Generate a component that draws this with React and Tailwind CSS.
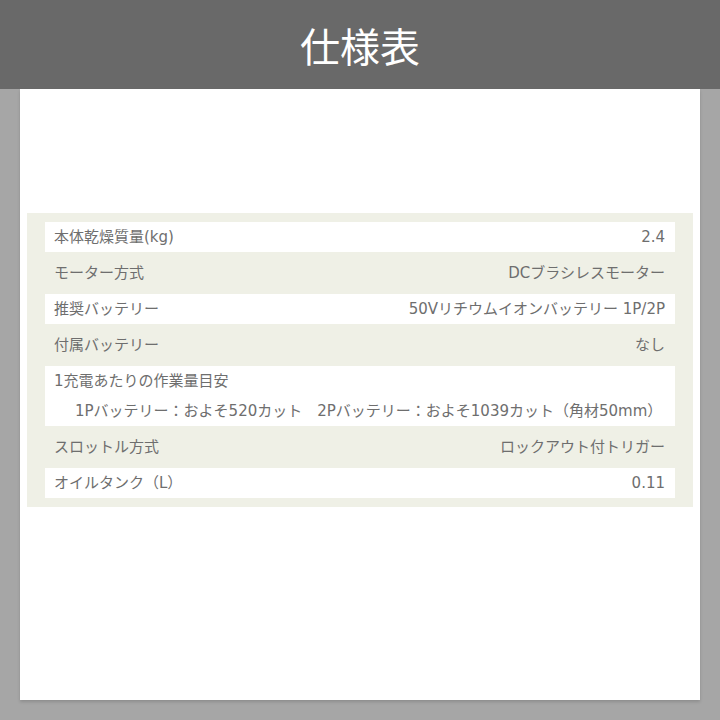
import React from 'react';

const SPECS = [
  { label: '本体乾燥質量(kg)', value: '2.4' },
  { label: 'モーター方式', value: 'DCブラシレスモーター' },
  { label: '推奨バッテリー', value: '50Vリチウムイオンバッテリー 1P/2P' },
  { label: '付属バッテリー', value: 'なし' },
  {
    label: '1充電あたりの作業量目安',
    note: '1Pバッテリー：およそ520カット　2Pバッテリー：およそ1039カット（角材50mm）',
  },
  { label: 'スロットル方式', value: 'ロックアウト付トリガー' },
  { label: 'オイルタンク（L）', value: '0.11' },
];

export default function App() {
  return (
    <div className="w-[720px] h-[720px] bg-[#a6a6a6] flex flex-col overflow-hidden">
      <header
        className="h-[89px] bg-[#696969] flex items-center justify-center shrink-0"
        style={{ fontFamily: '"Noto Sans CJK JP", sans-serif' }}
      >
        <h1 className="text-white text-[40px] leading-none">仕様表</h1>
      </header>

      <div className="mx-[20px] h-[611px] bg-white shadow-[0_2px_3px_rgba(0,0,0,0.15)] pt-[124px] px-[7px]">
        <div
          className="bg-[#eff0e6] px-[18px] py-[9px] flex flex-col gap-[6px] text-[15px] text-[#6e6e6e]"
          style={{ fontFamily: '"DejaVu Sans", "Noto Sans CJK JP", sans-serif' }}
        >
          {SPECS.map((row, i) => (
            <div
              key={row.label}
              className={`pl-[9px] pr-[10px] ${i % 2 === 0 ? 'bg-white' : ''} ${row.note ? 'flex flex-col' : 'h-[30px] flex items-center justify-between'}`}
            >
              {row.note ? (
                <>
                  <div className="h-[30px] flex items-center">{row.label}</div>
                  <div className="h-[30px] flex items-center pl-[21px]">{row.note}</div>
                </>
              ) : (
                <>
                  <span>{row.label}</span>
                  <span>{row.value}</span>
                </>
              )}
            </div>
          ))}
        </div>
      </div>
    </div>
  );
}
